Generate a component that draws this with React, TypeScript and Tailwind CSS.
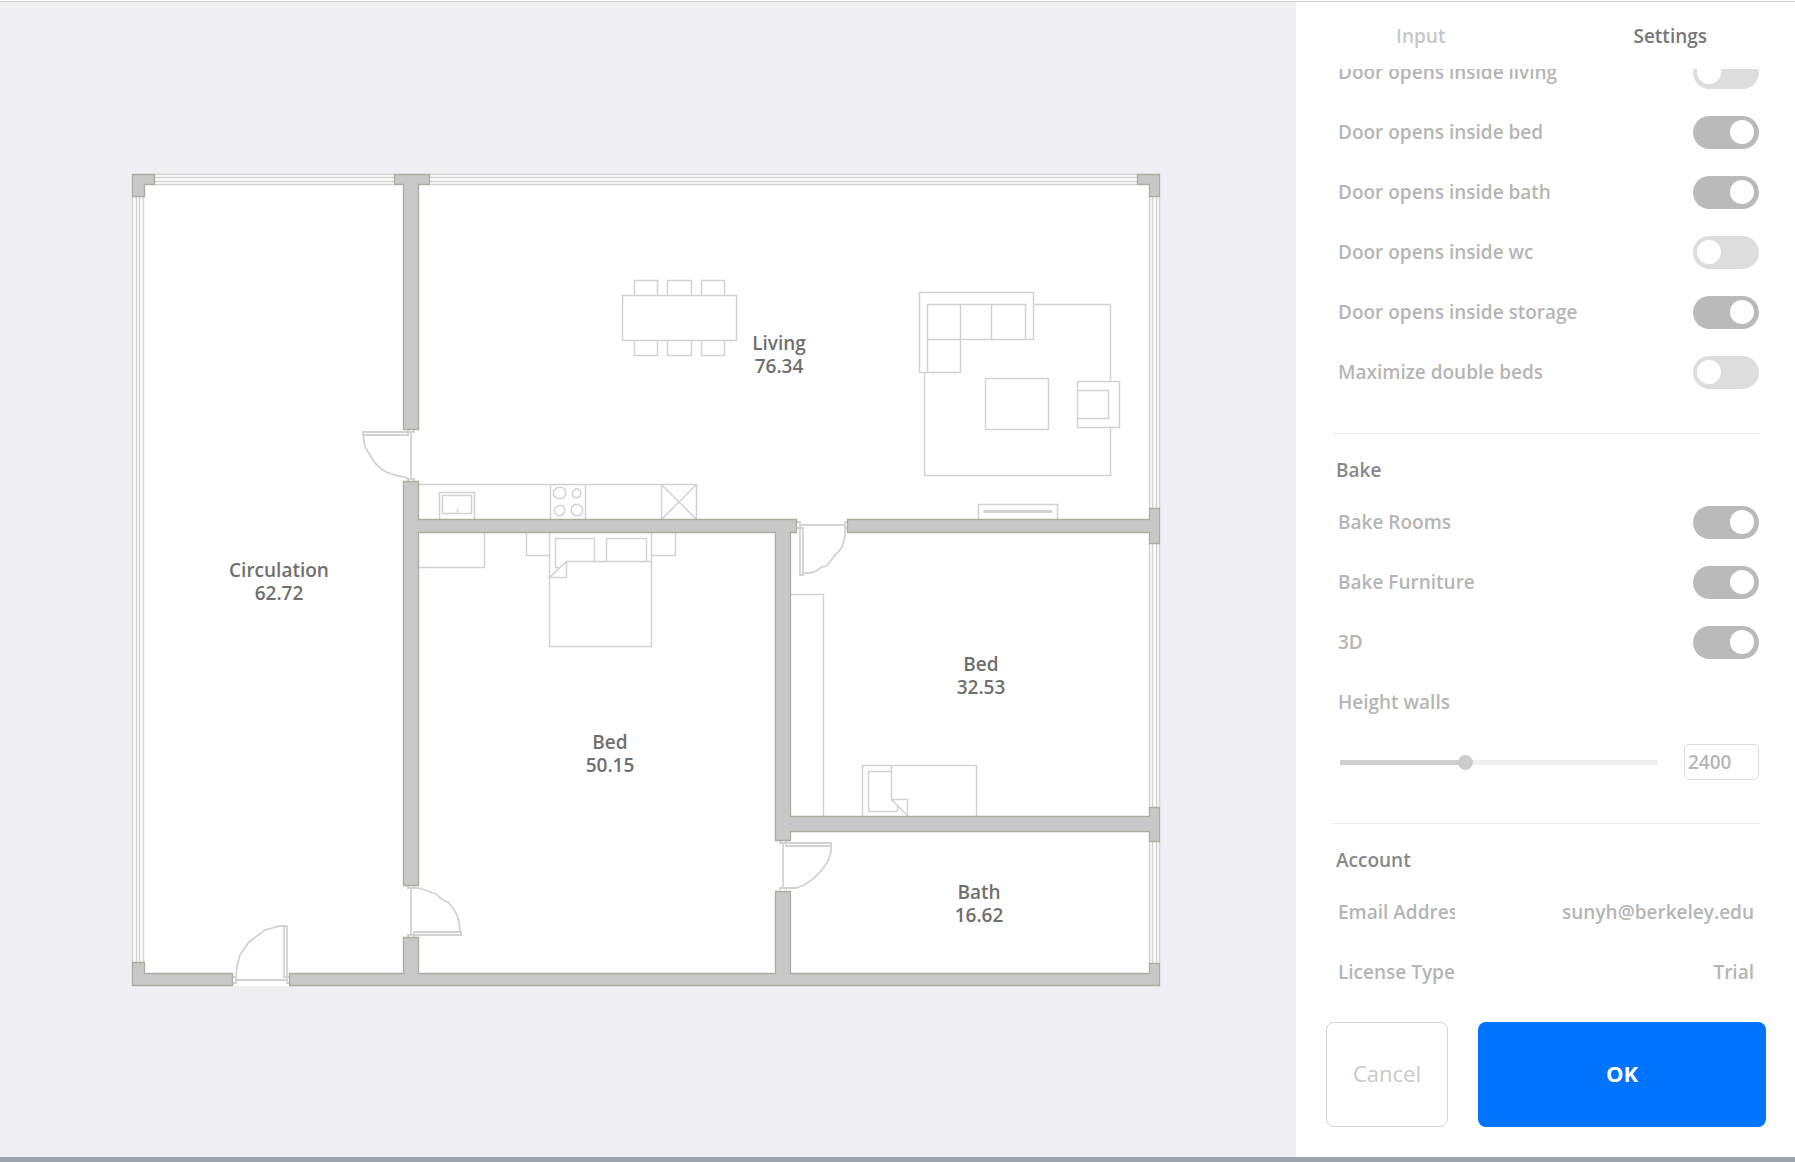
import { useState } from "react";
import type { CSSProperties } from "react";

const WALLS = [
  // top-left corner
  "M132 174H154V184H144V196H132Z",
  // top junction with the wall between circulation and living
  "M394 174H429V184H418V429H403V184H394Z",
  // top-right corner
  "M1137 174H1159V196H1149V184H1137Z",
  // left inner wall with the wall under the kitchen
  "M403 481H418V519H796V532H790V816H1149V807H1159V841H1149V831H790V840H775V532H418V885H403Z",
  // wall between living and the small bedroom
  "M847 519H1149V508H1159V543H1149V532H847Z",
  // bottom-left corner
  "M132 962H144V973H232V985H132Z",
  // bottom wall
  "M289 973H403V937H418V973H775V891H790V973H1149V963H1159V985H289Z",
];

const WINDOWS =
  "M154 174H394M154 177H394M154 181H394M154 184H394" +
  "M429 174H1137M429 177H1137M429 181H1137M429 184H1137" +
  "M132 196V962M136 196V962M139 196V962M143 196V962" +
  "M1149 196V508M1152 196V508M1156 196V508M1159 196V508" +
  "M1149 543V807M1152 543V807M1156 543V807M1159 543V807" +
  "M1149 841V963M1152 841V963M1156 841V963M1159 841V963";

const DOORS = [
  // circulation to living
  "M408 430V435H363V432H414V430M411 432V479M363 435L365 447L370 455L375 463L380 468L386 472L398 476L405 477L408 479H414V481M408 481V479",
  // circulation to large bedroom
  "M408 886V888H418L425 890L436 894L443 900L449 903L453 908L457 915L459 922L460 931L461 932V935H408V937M414 886V888M411 888V935M414 937V932H461",
  // entrance
  "M233 977H236V983H233M236 980H287M290 977H287V983H290M284 926V977H287V926M236 977L237 966L240 955L249 942L265 930L280 926H287",
  // living to small bedroom
  "M797 522H800V575H803V528H797M800 525H845M848 522H845V536L844 541L842 547L839 551L835 555L832 559L829 563L826 566L822 567L816 571L810 573H803M848 528H845",
  // bath
  "M780 841V843H831V846H786V841M783 843V888M831 843V852L828 861L822 870L813 879L804 885L796 888H780V890M786 888V890",
];

const FURNITURE =
  // dining table and chairs
  "M622 295H736V340H622ZM634 295V280H657V295M667 295V280H691V295M701 295V280H724V295" +
  "M634 341V355H657V341M667 341V355H691V341M701 341V355H724V341" +
  // sofa
  "M919 292H1033V339H960V372H919ZM927 372V304H1025V339M927 339H960V304M991 304V339" +
  // rug, coffee table, armchair
  "M1033 304H1110V380M1110 427V475H924V372M985 378H1048V429H985ZM1077 381H1119V427H1077ZM1077 390H1108V418H1077" +
  // television
  "M978 519V504H1057V519" +
  // kitchen counter, sink, stove, fridge
  "M418 484H696V519M439 519V492H474V519M442 495H471V513H442ZM457 508V512M550 484V519M585 484V519M661 484V519M661 484L696 519M696 484L661 519" +
  "M557 487H562L565 490V495L562 498H557L553 495V490ZM576 488L580 490V495L578 497H574L572 495V491ZM558 505H562L564 508V512L561 515H557L554 512V508ZM574 504H578L582 507V512L579 515H574L571 512V507Z" +
  // large bedroom
  "M418 567H484V532M526 532V555H549M675 532V555H651M549 532V646H651V532" +
  "M594 561V538H555V567H560M606 561V538H646V561M651 561H566V577H549L566 561" +
  // small bedroom
  "M790 594H823V816M862 816V765H976V816M891 765V799H907V815L891 799M891 771H868V811H897V805";

const ROOMS = [
  { name: "Circulation", area: "62.72", x: 279, y: 577 },
  { name: "Living", area: "76.34", x: 779, y: 350 },
  { name: "Bed", area: "50.15", x: 610, y: 749 },
  { name: "Bed", area: "32.53", x: 981, y: 671 },
  { name: "Bath", area: "16.62", x: 979, y: 899 },
];

function FloorPlan() {
  return (
    <svg viewBox="0 2 1296 1155" className="h-full w-full" role="img" aria-label="Floor plan">
      <path d="M132 174H1160V986H132Z" fill="#fff" />
      <g fill="none" stroke="#d2d2d2" strokeWidth="1.8">
        {DOORS.map((d) => (
          <path key={d} d={d} />
        ))}
      </g>
      <g transform="translate(0.5 0.5)" fill="none">
        <g stroke="#d2d2d2" strokeWidth="1.5">
          <path d={WINDOWS} />
          <path d={FURNITURE} />
          <path d="M983 511H1052" strokeWidth="3" />
        </g>
        <g fill="#c8c8c8" stroke="#abaca1" strokeWidth="1.3">
          {WALLS.map((d) => (
            <path key={d} d={d} />
          ))}
        </g>
      </g>
      <g fill="#6f6f6f" fontSize="19" fontWeight="650" textAnchor="middle">
        {ROOMS.map((room) => (
          <text key={room.area} x={room.x} y={room.y}>
            {room.name}
            <tspan x={room.x} dy="23">
              {room.area}
            </tspan>
          </text>
        ))}
      </g>
    </svg>
  );
}

function ToggleRow({ label, initial }: { label: string; initial: boolean }) {
  const [on, setOn] = useState(initial);
  return (
    <label className="flex h-[60px] shrink-0 cursor-pointer items-center justify-between pr-px pl-1.5">
      {label}
      <input
        type="checkbox"
        role="switch"
        checked={on}
        onChange={(e) => setOn(e.target.checked)}
        className="flex h-[33px] w-[66px] cursor-pointer appearance-none items-center rounded-full bg-[#dddddd] px-1 before:size-6 before:rounded-full before:bg-white checked:bg-[#bababa] checked:before:translate-x-[33px]"
      />
    </label>
  );
}

function SectionTitle({ children }: { children: string }) {
  return (
    <h2 className="mt-[31px] h-[59px] shrink-0 border-t border-[#ececec] pt-6 pl-1 leading-6 text-[#888888]">
      {children}
    </h2>
  );
}

function InfoRow({ label, value }: { label: string; value: string }) {
  return (
    <div className="flex h-[60px] shrink-0 items-center justify-between pr-1.5 pl-1.5">
      <dt className="w-[117px] overflow-hidden whitespace-nowrap">{label}</dt>
      <dd>{value}</dd>
    </div>
  );
}

const MIN_HEIGHT = 1000;
const MAX_HEIGHT = 4600;

function HeightWalls() {
  const [value, setValue] = useState(2400);
  const fill = `${((value - MIN_HEIGHT) / (MAX_HEIGHT - MIN_HEIGHT)) * 100}%`;
  return (
    <>
      <label htmlFor="height-walls" className="flex h-[60px] shrink-0 items-center pl-1.5">
        Height walls
      </label>
      <div className="flex h-[60px] shrink-0 items-center gap-[26px] pr-px pl-2">
        <input
          id="height-walls"
          type="range"
          min={MIN_HEIGHT}
          max={MAX_HEIGHT}
          value={value}
          onChange={(e) => setValue(Number(e.target.value))}
          style={{ "--fill": fill } as CSSProperties}
          className="h-[15px] min-w-0 flex-1 cursor-pointer appearance-none bg-transparent [&::-webkit-slider-runnable-track]:h-[5px] [&::-webkit-slider-runnable-track]:bg-[linear-gradient(to_right,#cfcfcf_var(--fill),#efefef_var(--fill))] [&::-webkit-slider-thumb]:mt-[-5px] [&::-webkit-slider-thumb]:size-[15px] [&::-webkit-slider-thumb]:appearance-none [&::-webkit-slider-thumb]:rounded-full [&::-webkit-slider-thumb]:bg-[#cbcbcb]"
        />
        <input
          type="text"
          aria-label="Height walls value"
          value={value}
          onChange={(e) => setValue(Number(e.target.value) || MIN_HEIGHT)}
          className="h-9 w-[75px] rounded-[5px] border border-[#dcdcdc] bg-white pl-[3px]"
        />
      </div>
    </>
  );
}

export default function App() {
  return (
    <div className="flex h-screen flex-col border-b-[5px] border-[#9ca3aa] bg-white pt-px font-['Open_Sans','Noto_Sans',sans-serif]">
      <div className="flex min-h-0 flex-1 border-t border-[#d2d2d2]">
        <main className="min-w-0 flex-1 bg-[#efeef3]">
          <FloorPlan />
        </main>
        <aside className="flex w-[499px] shrink-0 flex-col text-[19px] font-[650] text-[#b5b5b5]">
          <nav className="flex h-[67px] shrink-0">
            <button type="button" className="flex-1 pt-0.5 text-[#c8c8c8]">
              Input
            </button>
            <button type="button" className="flex-1 pt-0.5 text-[#777777]">
              Settings
            </button>
          </nav>
          <div className="flex min-h-0 flex-1 flex-col justify-end overflow-hidden pr-[35px] pl-9">
            <ToggleRow label="Door opens inside living" initial={false} />
            <ToggleRow label="Door opens inside bed" initial />
            <ToggleRow label="Door opens inside bath" initial />
            <ToggleRow label="Door opens inside wc" initial={false} />
            <ToggleRow label="Door opens inside storage" initial />
            <ToggleRow label="Maximize double beds" initial={false} />
            <SectionTitle>Bake</SectionTitle>
            <ToggleRow label="Bake Rooms" initial />
            <ToggleRow label="Bake Furniture" initial />
            <ToggleRow label="3D" initial />
            <HeightWalls />
            <SectionTitle>Account</SectionTitle>
            <dl>
              <InfoRow label="Email Address" value="sunyh@berkeley.edu" />
              <InfoRow label="License Type" value="Trial" />
            </dl>
          </div>
          <footer className="flex h-[155px] shrink-0 gap-[30px] pt-5 pr-[29px] pb-[30px] pl-[30px] text-[22px]">
            <button type="button" className="w-[122px] rounded-lg border border-[#d4d4d4] pb-0.5 font-normal text-[#c8c8c8]">
              Cancel
            </button>
            <button type="button" className="flex-1 rounded-lg bg-[#0073ff] pb-0.5 font-bold text-white">
              OK
            </button>
          </footer>
        </aside>
      </div>
    </div>
  );
}
